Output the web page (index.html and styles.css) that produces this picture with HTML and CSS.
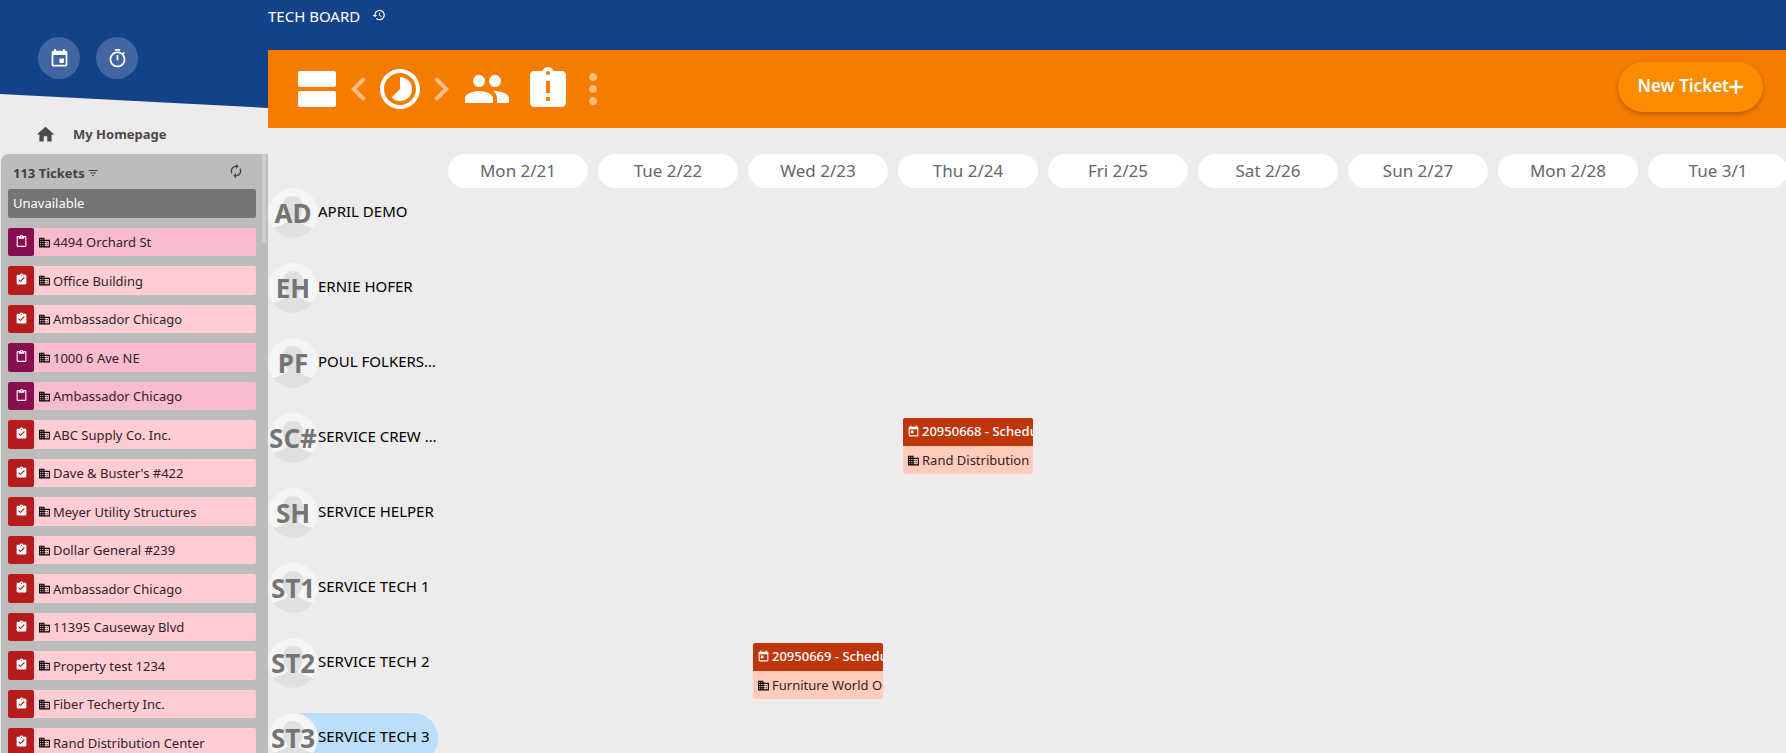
FILE: index.html
```html
<!DOCTYPE html>
<html lang="en">
<head>
<meta charset="utf-8">
<title>Tech Board</title>
<link rel="stylesheet" href="styles.css">
</head>
<body>
<svg class="sprite" aria-hidden="true">
  <symbol id="event" viewBox="0 0 24 24"><path d="M17 12h-5v5h5v-5zM16 1v2H8V1H6v2H5c-1.11 0-2 .9-2 2v14c0 1.1.89 2 2 2h14c1.1 0 2-.9 2-2V5c0-1.1-.9-2-2-2h-1V1h-2zm3 18H5V8h14v11z"/></symbol>
  <symbol id="timer" viewBox="0 0 24 24"><path d="M15 1H9v2h6V1zm-4 13h2V8h-2v6zm8.03-6.61l1.42-1.42c-.43-.51-.9-.99-1.41-1.41l-1.42 1.42C16.07 4.74 14.12 4 12 4c-4.97 0-9 4.03-9 9s4.02 9 9 9 9-4.03 9-9c0-2.12-.74-4.07-1.97-5.61zM12 20c-3.87 0-7-3.13-7-7s3.13-7 7-7 7 3.13 7 7-3.13 7-7 7z"/></symbol>
  <symbol id="home" viewBox="0 0 24 24"><path d="M10 20v-6h4v6h5v-8h3L12 3 2 12h3v8z"/></symbol>
  <symbol id="history" viewBox="0 0 24 24"><path d="M13 3a9 9 0 0 0-9 9H1l3.89 3.89.07.14L9 12H6c0-3.87 3.13-7 7-7s7 3.13 7 7-3.13 7-7 7c-1.93 0-3.68-.79-4.94-2.06l-1.42 1.42A8.954 8.954 0 0 0 13 21a9 9 0 0 0 0-18zm-1 5v5l4.28 2.54.72-1.21-3.5-2.08V8H12z"/></symbol>
  <symbol id="filter" viewBox="0 0 24 24"><path d="M10 18h4v-2h-4v2zM3 6v2h18V6H3zm3 7h12v-2H6v2z"/></symbol>
  <symbol id="renew" viewBox="0 0 24 24"><path d="M12 6v3l4-4-4-4v3c-4.42 0-8 3.58-8 8 0 1.57.46 3.03 1.24 4.26L6.7 14.8c-.45-.83-.7-1.79-.7-2.8 0-3.31 2.69-6 6-6zm6.76 1.74L17.3 9.2c.44.84.7 1.79.7 2.8 0 3.31-2.69 6-6 6v-3l-4 4 4 4v-3c4.42 0 8-3.58 8-8 0-1.57-.46-3.03-1.24-4.26z"/></symbol>
  <symbol id="paste" viewBox="0 0 24 24"><path d="M19 2h-4.18C14.4.84 13.3 0 12 0S9.6.84 9.18 2H5c-1.1 0-2 .9-2 2v16c0 1.1.9 2 2 2h14c1.1 0 2-.9 2-2V4c0-1.1-.9-2-2-2zm-7 0c.55 0 1 .45 1 1s-.45 1-1 1-1-.45-1-1 .45-1 1-1zm7 18H5V4h2v3h10V4h2v16z"/></symbol>
  <symbol id="done" viewBox="0 0 24 24"><path d="M19 3h-4.18C14.4 1.84 13.3 1 12 1S9.6 1.84 9.18 3H5c-1.1 0-2 .9-2 2v14c0 1.1.9 2 2 2h14c1.1 0 2-.9 2-2V5c0-1.1-.9-2-2-2zm-7 0c.55 0 1 .45 1 1s-.45 1-1 1-1-.45-1-1 .45-1 1-1zm-2 14l-4-4 1.41-1.41L10 14.17l6.59-6.59L18 9l-8 8z"/></symbol>
  <symbol id="late" viewBox="0 0 24 24"><path d="M19 3h-4.18C14.4 1.84 13.3 1 12 1S9.6 1.84 9.18 3H5c-1.1 0-2 .9-2 2v14c0 1.1.9 2 2 2h14c1.1 0 2-.9 2-2V5c0-1.1-.9-2-2-2zm-6 15h-2v-2h2v2zm0-4h-2V8h2v6zm-1-9c-.55 0-1-.45-1-1s.45-1 1-1 1 .45 1 1-.45 1-1 1z"/></symbol>
  <symbol id="site" viewBox="0 0 24 24"><path d="M12 7V3H2v18h20V7H12zM6 19H4v-2h2v2zm0-4H4v-2h2v2zm0-4H4V9h2v2zm0-4H4V5h2v2zm4 12H8v-2h2v2zm0-4H8v-2h2v2zm0-4H8V9h2v2zm0-4H8V5h2v2zm10 12h-8v-2h2v-2h-2v-2h2v-2h-2V9h8v10zm-2-8h-2v2h2v-2zm0 4h-2v2h2v-2z"/></symbol>
  <symbol id="today" viewBox="0 0 24 24"><path d="M19 3h-1V1h-2v2H8V1H6v2H5c-1.11 0-2 .9-2 2v14c0 1.1.89 2 2 2h14c1.1 0 2-.9 2-2V5c0-1.1-.9-2-2-2zm0 16H5V8h14v11zM7 10h5v5H7z"/></symbol>
  <symbol id="agenda" viewBox="0 0 24 24"><path d="M20 13H3c-.55 0-1 .45-1 1v6c0 .55.45 1 1 1h17c.55 0 1-.45 1-1v-6c0-.55-.45-1-1-1zm0-10H3c-.55 0-1 .45-1 1v6c0 .55.45 1 1 1h17c.55 0 1-.45 1-1V4c0-.55-.45-1-1-1z"/></symbol>
  <symbol id="left" viewBox="6 0 12 24"><path d="M15.41 7.41L14 6l-6 6 6 6 1.41-1.41L10.83 12z"/></symbol>
  <symbol id="right" viewBox="6 0 12 24"><path d="M10 6L8.59 7.41 13.17 12l-4.58 4.59L10 18l6-6z"/></symbol>
  <symbol id="timelapse" viewBox="0 0 24 24"><path d="M16.24 7.76A5.974 5.974 0 0 0 12 6v6l-4.24 4.24c2.34 2.34 6.14 2.34 8.49 0a5.99 5.99 0 0 0-.01-8.48zM12 2C6.48 2 2 6.48 2 12s4.48 10 10 10 10-4.48 10-10S17.52 2 12 2zm0 18c-4.42 0-8-3.58-8-8s3.58-8 8-8 8 3.58 8 8-3.58 8-8 8z"/></symbol>
  <symbol id="people" viewBox="0 0 24 24"><path d="M16 11c1.66 0 2.99-1.34 2.99-3S17.66 5 16 5s-3 1.34-3 3 1.34 3 3 3zm-8 0c1.66 0 2.99-1.34 2.99-3S9.66 5 8 5 5 6.34 5 8s1.34 3 3 3zm0 2c-2.33 0-7 1.17-7 3.5V19h14v-2.500c0-2.330-4.670-3.500-7-3.500zm8 0c-.29 0-.62.02-.97.05 1.16.84 1.97 1.97 1.97 3.450V19h6v-2.500c0-2.330-4.670-3.500-7-3.500z"/></symbol>
  <symbol id="more" viewBox="8 0 8 24"><path d="M12 8c1.1 0 2-.9 2-2s-.9-2-2-2-2 .9-2 2 .9 2 2 2zm0 2c-1.1 0-2 .9-2 2s.9 2 2 2 2-.9 2-2-.9-2-2-2zm0 6c-1.1 0-2 .9-2 2s.9 2 2 2 2-.9 2-2-.9-2-2-2z"/></symbol>
  <symbol id="add" viewBox="0 0 14 14"><path d="M6 0h2v6h6v2H8v6H6V8H0V6h6z" stroke="currentColor" stroke-width=".5"/></symbol>
  <symbol id="person" viewBox="0 0 50 50"><circle cx="25" cy="25" r="25" fill="#f5f5f5"/><path d="M25 8c-6 0-10 4-10 10 0 6 2 11 5 14-1 4-9 6-15 8a25 25 0 0 0 40 0c-6-2-14-4-15-8 3-3 5-8 5-14 0-6-4-10-10-10z" fill="#e0e0e0"/></symbol>
</svg>
<div class="app">
  <aside class="sidebar">
    <div class="brand">
      <button class="round" aria-label="Calendar"><svg><use href="#event"/></svg></button>
      <button class="round" aria-label="Timer"><svg><use href="#timer"/></svg></button>
    </div>
    <a class="home" href="#home"><svg><use href="#home"/></svg>My Homepage</a>
    <section class="tickets">
      <div class="scroll-thumb"></div>
      <header class="tickets-head">
        <h2>113 Tickets</h2>
        <button class="plain" aria-label="Filter"><svg class="i12"><use href="#filter"/></svg></button>
        <button class="plain refresh" aria-label="Refresh"><svg class="i16"><use href="#renew"/></svg></button>
      </header>
      <div class="unavailable">Unavailable</div>
      <ul class="list">
        <li class="ticket plum"><span class="kind"><svg><use href="#paste"/></svg></span><svg class="mark"><use href="#site"/></svg>4494 Orchard St</li>
        <li class="ticket"><span class="kind"><svg><use href="#done"/></svg></span><svg class="mark"><use href="#site"/></svg>Office Building</li>
        <li class="ticket"><span class="kind"><svg><use href="#done"/></svg></span><svg class="mark"><use href="#site"/></svg>Ambassador Chicago</li>
        <li class="ticket plum"><span class="kind"><svg><use href="#paste"/></svg></span><svg class="mark"><use href="#site"/></svg>1000 6 Ave NE</li>
        <li class="ticket plum"><span class="kind"><svg><use href="#paste"/></svg></span><svg class="mark"><use href="#site"/></svg>Ambassador Chicago</li>
        <li class="ticket"><span class="kind"><svg><use href="#done"/></svg></span><svg class="mark"><use href="#site"/></svg>ABC Supply Co. Inc.</li>
        <li class="ticket"><span class="kind"><svg><use href="#done"/></svg></span><svg class="mark"><use href="#site"/></svg>Dave &amp; Buster's #422</li>
        <li class="ticket"><span class="kind"><svg><use href="#done"/></svg></span><svg class="mark"><use href="#site"/></svg>Meyer Utility Structures</li>
        <li class="ticket"><span class="kind"><svg><use href="#done"/></svg></span><svg class="mark"><use href="#site"/></svg>Dollar General #239</li>
        <li class="ticket"><span class="kind"><svg><use href="#done"/></svg></span><svg class="mark"><use href="#site"/></svg>Ambassador Chicago</li>
        <li class="ticket"><span class="kind"><svg><use href="#done"/></svg></span><svg class="mark"><use href="#site"/></svg>11395 Causeway Blvd</li>
        <li class="ticket"><span class="kind"><svg><use href="#done"/></svg></span><svg class="mark"><use href="#site"/></svg>Property test 1234</li>
        <li class="ticket"><span class="kind"><svg><use href="#done"/></svg></span><svg class="mark"><use href="#site"/></svg>Fiber Techerty Inc.</li>
        <li class="ticket"><span class="kind"><svg><use href="#done"/></svg></span><svg class="mark"><use href="#site"/></svg>Rand Distribution Center</li>
      </ul>
    </section>
  </aside>
  <main class="main">
    <header class="topbar">
      <h1>TECH BOARD</h1>
      <button class="plain" aria-label="History"><svg class="i14"><use href="#history"/></svg></button>
    </header>
    <nav class="toolbar">
      <div class="range">
        <button class="plain" aria-label="Agenda view"><svg class="i48"><use href="#agenda"/></svg></button>
        <button class="plain faint" aria-label="Previous"><svg class="arrow"><use href="#left"/></svg></button>
        <button class="plain" aria-label="Time span"><svg class="i48"><use href="#timelapse"/></svg></button>
        <button class="plain faint" aria-label="Next"><svg class="arrow"><use href="#right"/></svg></button>
      </div>
      <div class="tools">
        <button class="plain" aria-label="People"><svg class="i48"><use href="#people"/></svg></button>
        <button class="plain" aria-label="Late tickets"><svg class="i48"><use href="#late"/></svg></button>
        <button class="plain faint" aria-label="More"><svg class="dots"><use href="#more"/></svg></button>
      </div>
      <button class="new-ticket">New Ticket<svg><use href="#add"/></svg></button>
    </nav>
    <section class="board">
      <div class="row days">
        <div></div>
        <div class="day">Mon 2/21</div><div class="day">Tue 2/22</div><div class="day">Wed 2/23</div><div class="day">Thu 2/24</div><div class="day">Fri 2/25</div><div class="day">Sat 2/26</div><div class="day">Sun 2/27</div><div class="day">Mon 2/28</div><div class="day">Tue 3/1</div>
      </div>
      <div class="row tech-row"><div class="tech"><span class="avatar"><svg><use href="#person"/></svg><b>AD</b></span><span class="name">APRIL DEMO</span></div></div>
      <div class="row tech-row"><div class="tech"><span class="avatar"><svg><use href="#person"/></svg><b>EH</b></span><span class="name">ERNIE HOFER</span></div></div>
      <div class="row tech-row"><div class="tech"><span class="avatar"><svg><use href="#person"/></svg><b>PF</b></span><span class="name">POUL FOLKERSON</span></div></div>
      <div class="row tech-row"><div class="tech"><span class="avatar"><svg><use href="#person"/></svg><b>SC#</b></span><span class="name">SERVICE CREW #1</span></div>
        <article class="job thu"><div class="job-head"><svg class="mark"><use href="#today"/></svg>20950668 - Scheduled</div><div class="job-site"><svg class="mark"><use href="#site"/></svg>Rand Distribution</div></article>
      </div>
      <div class="row tech-row"><div class="tech"><span class="avatar"><svg><use href="#person"/></svg><b>SH</b></span><span class="name">SERVICE HELPER</span></div></div>
      <div class="row tech-row"><div class="tech"><span class="avatar"><svg><use href="#person"/></svg><b>ST1</b></span><span class="name">SERVICE TECH 1</span></div></div>
      <div class="row tech-row"><div class="tech"><span class="avatar"><svg><use href="#person"/></svg><b>ST2</b></span><span class="name">SERVICE TECH 2</span></div>
        <article class="job wed"><div class="job-head"><svg class="mark"><use href="#today"/></svg>20950669 - Scheduled</div><div class="job-site"><svg class="mark"><use href="#site"/></svg>Furniture World Outlet</div></article>
      </div>
      <div class="row tech-row"><div class="tech selected"><span class="avatar"><svg><use href="#person"/></svg><b>ST3</b></span><span class="name">SERVICE TECH 3</span></div></div>
    </section>
  </main>
</div>
</body>
</html>
```
FILE: styles.css
```css
* { box-sizing: border-box; }
body {
  margin: 0;
  background: #edebec;
  color: #000;
  font-family: "Noto Sans", sans-serif;
  font-size: 13px;
  line-height: 20px;
}
svg { display: block; flex: none; fill: currentColor; }
button { font: inherit; color: inherit; border: 0; cursor: pointer; }
h1, h2, ul { margin: 0; padding: 0; font-size: inherit; }
.sprite { position: absolute; width: 0; height: 0; }
.plain { padding: 0; background: none; }
.i12 { width: 12px; height: 12px; }
.i14 { width: 14px; height: 14px; }
.i16 { width: 16px; height: 16px; }
.i48 { width: 48px; height: 48px; }
.mark { width: 13px; height: 13px; }

.app { display: flex; height: 100vh; overflow: hidden; }

/* Sidebar */
.sidebar { flex: none; width: 268px; display: flex; flex-direction: column; }
.brand {
  flex: none;
  height: 108px;
  display: flex;
  align-items: center;
  gap: 16px;
  padding: 8px 38px 0;
  background: #134289;
  clip-path: polygon(0 0, 100% 0, 100% 100%, 0 94px);
}
.round {
  display: grid;
  place-items: center;
  width: 42px;
  height: 42px;
  padding: 0;
  border-radius: 50%;
  background: #4266a1;
  color: #fff;
}
.round svg { width: 21px; height: 21px; }
.home {
  flex: none;
  display: flex;
  align-items: center;
  gap: 17px;
  height: 46px;
  padding: 6px 35px 0;
  color: #4a4848;
  font-weight: 700;
  text-decoration: none;
}
.home svg { width: 21px; height: 21px; }
.tickets {
  position: relative;
  flex: 1;
  min-height: 0;
  margin-left: 1px;
  padding: 0 12px 0 7px;
  border-radius: 8px 0 0 0;
  background: #bcbcbc;
  overflow: hidden;
}
.scroll-thumb { position: absolute; top: 0; right: 2px; width: 4px; height: 89px; background: #cdcdcd; }
.tickets-head { display: flex; align-items: center; gap: 2px; height: 35px; padding: 3px 12px 0 5px; color: #424242; }
.tickets-head h2 { font-weight: 700; }
.refresh { margin: 0 0 5px auto; }
.unavailable { height: 29px; margin-bottom: 10px; padding: 4px 5px; border-radius: 2px; background: #757575; color: #fff; }
.list { list-style: none; }
.ticket {
  display: flex;
  align-items: center;
  gap: 2px;
  height: 28px;
  margin-bottom: 10px;
  border-radius: 2px;
  background: #ffcdd2;
  color: #33202a;
}
.ticket:nth-child(even) { height: 29px; }
.ticket .mark, .job-site .mark { color: #000; }
.kind {
  align-self: stretch;
  display: grid;
  place-items: center;
  width: 26px;
  margin-right: 2px;
  padding-bottom: 2px;
  border-radius: 2px;
  background: #b71c1c;
  color: #fff;
}
.kind svg { width: 13px; height: 13px; }
.plum { background: #f8bbd0; }
.plum .kind { background: #880e4f; }

/* Main area */
.main { flex: 1; min-width: 0; overflow: hidden; }
.topbar { display: flex; gap: 12px; height: 50px; padding-top: 6px; background: #134289; color: #fff; font-size: 15px; }
.topbar h1 { font-weight: 400; }
.topbar button { align-self: flex-start; padding-top: 2px; }
.toolbar { display: flex; align-items: center; height: 78px; padding: 0 23px 0 26px; background: #f67c00; color: #fff; }
.range, .tools { display: flex; align-items: center; gap: 5px; }
.tools { gap: 13px; margin-left: 10px; }
.faint { opacity: .5; }
.arrow { width: 24px; height: 48px; }
.dots { width: 16px; height: 48px; }
.new-ticket {
  display: flex;
  align-items: center;
  height: 50px;
  margin: 0 0 4px auto;
  padding: 0 20px 2px;
  border-radius: 25px;
  background: #fb8c00;
  box-shadow: 0 2px 5px rgba(0, 0, 0, .26);
  color: #fff;
  font-size: 17px;
  font-weight: 600;
}
.new-ticket svg { width: 14px; height: 14px; margin-top: 2px; }

/* Schedule */
.board { padding-top: 26px; }
.row { display: grid; grid-template-columns: 170px repeat(9, minmax(140px, 1fr)); column-gap: 10px; }
.day { height: 34px; border-radius: 17px; background: #fff; color: #666; font-size: 17px; line-height: 34px; text-align: center; }
.tech-row { height: 75px; align-items: start; }
.tech { grid-column: 1; display: flex; align-items: center; height: 50px; border-radius: 25px; font-size: 15px; }
.selected { background: #bbdefb; }
.avatar { flex: none; display: grid; place-items: center; width: 50px; height: 50px; }
.avatar svg, .avatar b { grid-area: 1 / 1; }
.avatar svg { width: 50px; height: 50px; }
.avatar b { z-index: 1; color: #757575; font-size: 26px; line-height: 50px; }
.name { flex: 1; min-width: 0; padding-bottom: 4px; overflow: hidden; text-overflow: ellipsis; white-space: nowrap; }
.job { margin: 5px; border-radius: 2px; overflow: hidden; }
.wed { grid-column: 4; }
.thu { grid-column: 5; }
.job-head, .job-site { display: flex; align-items: center; gap: 2px; height: 28px; padding: 0 0 2px 4px; white-space: nowrap; }
.job-head { background: #bf360c; color: #fff; font-weight: 500; }
.job-site { padding-bottom: 0; background: #ffccbc; color: #33231f; }
```
